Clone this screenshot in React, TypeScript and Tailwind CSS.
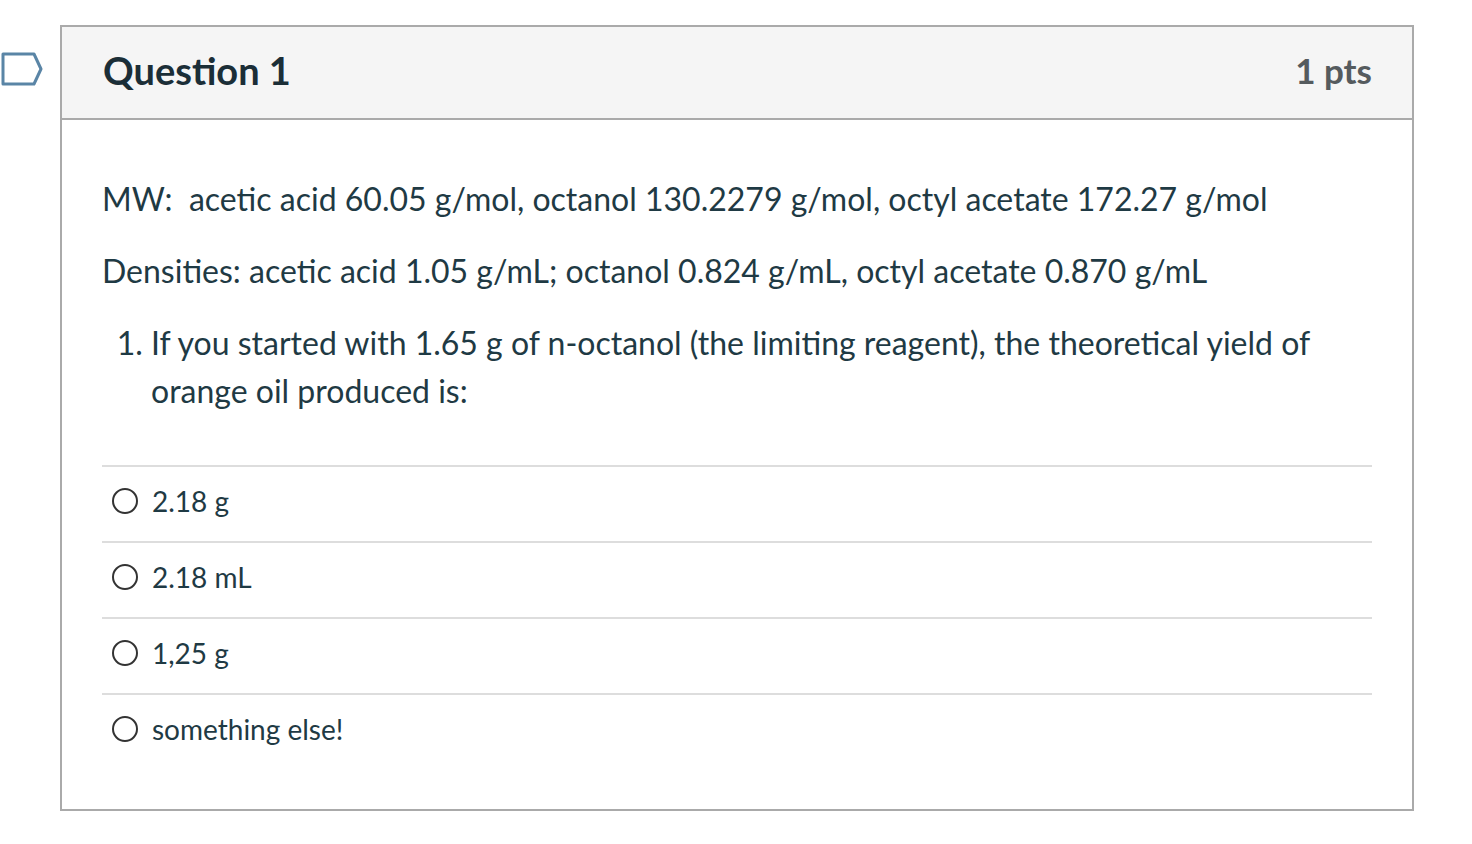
const answers = ['2.18 g', '2.18 mL', '1,25 g', 'something else!']

function Flag() {
  return (
    <svg width="44" height="34" viewBox="0 0 44 34" className="absolute left-0 top-[52px]">
      <path d="M3 2 H34 L41 17 L34 32 H3 Z" fill="white" stroke="#5a85a6" strokeWidth="3" strokeLinejoin="round" />
    </svg>
  )
}

export default function App() {
  return (
    <div className="relative min-h-[844px] bg-white pl-[60px] pt-[25px]" style={{ fontFamily: 'Lato, "Noto Sans", sans-serif' }}>
      <Flag />
      <div className="w-[1354px] border-2 border-[#aaaaaa] text-[#1f3a44]">
        <div className="flex h-[93px] items-center justify-between border-b-2 border-[#aaaaaa] bg-[#f5f5f5] pb-[4px] pl-[41px] pr-[40px]">
          <h2 className="text-[38px] font-bold text-[#1b2e37]">Question 1</h2>
          <span className="text-[35px] font-bold text-[#555b5e]">1 pts</span>
        </div>
        <div className="px-[40px] pt-[55px] pb-[40px] text-[32px] leading-[48px]">
          <p className="mb-[24px]">MW:&nbsp; acetic acid 60.05 g/mol, octanol 130.2279 g/mol, octyl acetate 172.27 g/mol</p>
          <p className="mb-[24px]">Densities: acetic acid 1.05 g/mL; octanol 0.824 g/mL, octyl acetate 0.870 g/mL</p>
          <ol className="mb-[50px] list-outside list-decimal pl-[49px]">
            <li>If you started with 1.65 g of n-octanol (the limiting reagent), the theoretical yield of orange oil produced is:</li>
          </ol>
          <div className="text-[28px]">
            {answers.map((a) => (
              <div key={a} className="flex h-[76px] items-center border-t-2 border-[#dddddd] pb-[6px] pl-[10px]">
                <span className="mr-[14px] h-[26px] w-[26px] rounded-full border-2 border-[#333333]" />
                <span>{a}</span>
              </div>
            ))}
          </div>
        </div>
      </div>
    </div>
  )
}
